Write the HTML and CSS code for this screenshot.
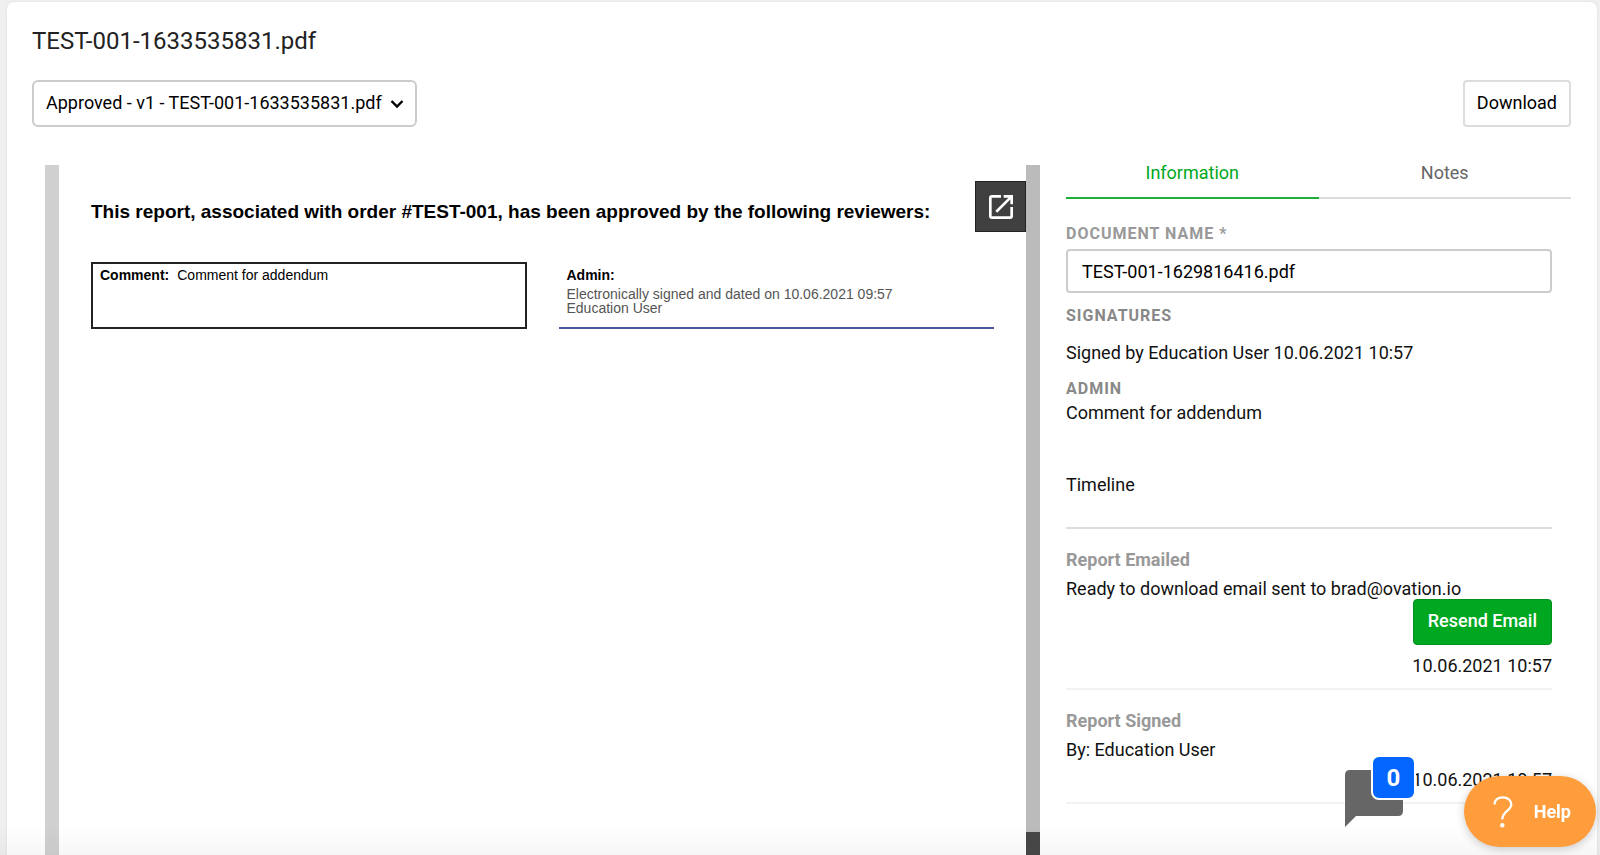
FILE: index.html
```html
<!DOCTYPE html>
<html lang="en">
    <head>
        <meta charset="utf-8">
        <title>TEST-001-1633535831.pdf</title>
        <link rel="stylesheet" href="styles.css">
    </head>
    <body>
        <main class="card">
            <h1 class="title">TEST-001-1633535831.pdf</h1>

            <div class="toolbar">
                <div class="version">
                    <select class="version_select" aria-label="Document version">
                        <option>Approved - v1 - TEST-001-1633535831.pdf</option>
                    </select>
                    <svg class="chevron" viewBox="0 0 14 10" aria-hidden="true">
                        <path d="M1.5 2 L7 7.5 L12.5 2" fill="none" stroke="#000" stroke-width="2.4"/>
                    </svg>
                </div>
                <button class="btn">Download</button>
            </div>

            <div class="content">
                <section class="viewer">
                    <div class="page">
                        <h2 class="page_title">This report, associated with order #TEST-001, has been approved by the following reviewers:</h2>
                        <div class="reviewers">
                            <p class="comment"><b>Comment:</b>Comment for addendum</p>
                            <div class="signature">
                                <b>Admin:</b>
                                <p>Electronically signed and dated on 10.06.2021 09:57<br>Education User</p>
                            </div>
                        </div>
                    </div>
                    <button class="popout" aria-label="Open in new window">
                        <svg viewBox="0 0 24 24" width="32" height="32">
                            <path fill="#fff" d="M19 19H5V5h7V3H5c-1.100 0-2 .9-2 2v14c0 1.100.9 2 2 2h14c1.100 0 2-.9 2-2v-7h-2v7zM14 3v2h3.590l-9.830 9.830 1.410 1.410L19 6.410V10h2V3h-7z"/>
                        </svg>
                    </button>
                    <div class="scroll"><div class="scroll_end"></div></div>
                </section>

                <aside class="side">
                    <nav class="tabs">
                        <button class="tab active">Information</button>
                        <button class="tab">Notes</button>
                    </nav>
                    <div class="info">
                        <label class="label" for="docname">Document name *</label>
                        <input class="docname" id="docname" type="text" value="TEST-001-1629816416.pdf">
                        <h3 class="label sign_label">Signatures</h3>
                        <p class="signed">Signed by Education User 10.06.2021 10:57</p>
                        <h3 class="label">Admin</h3>
                        <p>Comment for addendum</p>
                        <h3 class="timeline_title">Timeline</h3>
                        <ul class="timeline">
                            <li class="event">
                                <h4>Report Emailed</h4>
                                <p>Ready to download email sent to brad@ovation.io</p>
                                <button class="resend">Resend Email</button>
                                <time>10.06.2021 10:57</time>
                            </li>
                            <li class="event">
                                <h4>Report Signed</h4>
                                <p>By: Education User</p>
                                <time>10.06.2021 10:57</time>
                            </li>
                        </ul>
                    </div>
                </aside>
            </div>
        </main>

        <div class="shade"></div>

        <!-- floating chat and help buttons -->
        <button class="chat" aria-label="Messages">
            <svg viewBox="0 0 58 58" width="58" height="58">
                <path fill="#666" d="M5 0H53Q58 0 58 5V41Q58 46 53 46H11L0 57V5Q0 0 5 0Z"/>
            </svg>
            <span class="badge">0</span>
        </button>
        <button class="help">
            <svg viewBox="0 0 20 32" width="20" height="32" aria-hidden="true">
                <path d="M1.500 8.500C1.500 4 5 1.300 9.800 1.300C14.800 1.300 18.300 4.300 18.300 8.500C18.300 14.500 9.300 15 9.300 23.500" fill="none" stroke="#fff" stroke-width="2.300"/>
                <circle cx="9.300" cy="29.300" r="2.200" fill="#fff"/>
            </svg>
            <span>Help</span>
        </button>
    </body>
</html>
```
FILE: styles.css
```css
*{
    box-sizing: border-box;
}
body{
    margin: 0;
    height: 100vh;
    overflow: hidden;
    padding: 2px 3px 0 7px;
    background-color: #f0f0f0;
    color: #111;
    font-family: Roboto, Arial, sans-serif;
    font-size: 18px;
    line-height: 24px;
}
h1,h2,h3,h4,p,ul{
    margin: 0;
    padding: 0;
    font-size: inherit;
    font-weight: normal;
}
button,input,select{
    font-family: inherit;
    font-size: inherit;
    line-height: inherit;
    color: #000;
    margin: 0;
}
button{
    cursor: pointer;
}
.card{
    display: flex;
    flex-direction: column;
    height: 100%;
    padding: 23px 26px 0 25px;
    background-color: white;
    border-radius: 7px 7px 0 0;
    box-shadow: 0 0 3px #ddd;
}
.title{
    font-size: 24px;
    line-height: 32px;
    color: #222;
}

/* version picker and download */
.toolbar{
    display: flex;
    justify-content: space-between;
    margin-top: 23px;
}
.version{
    position: relative;
}
.version_select{
    appearance: none;
    height: 47px;
    padding: 0 32px 2px 12px;
    background-color: white;
    border: 2px solid #ccc;
    border-radius: 6px;
}
.chevron{
    position: absolute;
    right: 13px;
    top: 19px;
    width: 14px;
    height: 10px;
    pointer-events: none;
}
.btn{
    height: 47px;
    padding: 0 12px 2px;
    background-color: white;
    border: 2px solid #ddd;
    border-radius: 4px;
}

/* document viewer */
.content{
    display: flex;
    flex: 1;
    min-height: 0;
    gap: 26px;
    padding: 38px 0 0 13px;
}
.viewer{
    flex: 1;
    min-width: 0;
    display: flex;
    position: relative;
    border-left: 14px solid #d0d0d0;
}
.page{
    flex: 1;
    min-width: 0;
    padding: 33px 32px;
    color: black;
    font-family: "Liberation Sans", Arial, sans-serif;
    font-size: 14px;
    line-height: 14px;
}
.page_title{
    font-size: 19px;
    line-height: 28px;
    font-weight: bold;
    white-space: nowrap;
}
.reviewers{
    display: grid;
    grid-template-columns: 1fr 1fr;
    gap: 32px;
    margin-top: 36px;
}
.comment{
    min-height: 67px;
    padding: 4px 7px;
    border: 2px solid #222;
}
.comment b{
    margin-right: 8px;
}
.signature{
    padding: 6px 8px;
    border-bottom: 2px solid #4a569c;
}
.signature p{
    margin-top: 5px;
    color: #555;
}
.popout{
    position: absolute;
    top: 16px;
    right: 14px;
    display: flex;
    align-items: center;
    justify-content: center;
    width: 51px;
    height: 51px;
    padding: 0;
    background-color: #404040;
    border: 1px solid #222;
}
.scroll{
    display: flex;
    align-items: flex-end;
    width: 14px;
    background-color: #bbb;
}
.scroll_end{
    width: 14px;
    height: 23px;
    background-color: #484848;
}

/* side panel */
.side{
    width: 34%;
    max-width: 505px;
}
.tabs{
    display: flex;
    border-bottom: 2px solid #ddd;
}
.tab{
    flex: 1;
    height: 34px;
    margin-bottom: -2px;
    padding: 0 0 16px;
    background: none;
    border: none;
    border-bottom: 2px solid transparent;
    line-height: 16px;
    color: #666;
}
.tab.active{
    color: #00a81c;
    border-color: #1fae36;
}
.info{
    padding: 23px 19px 0 0;
}
.label{
    display: block;
    font-size: 16px;
    font-weight: bold;
    letter-spacing: 1px;
    text-transform: uppercase;
    color: #888;
}
label.label{
    color: #999;
}
.docname{
    display: block;
    width: 100%;
    height: 44px;
    margin-top: 3px;
    padding: 0 14px;
    background-color: white;
    border: 2px solid #ccc;
    border-radius: 4px;
}
.sign_label{
    margin-top: 11px;
}
.signed{
    margin: 13px 0 12px;
}
.timeline_title{
    padding: 48px 0 30px;
    border-bottom: 2px solid #ddd;
}
.timeline{
    list-style: none;
}
.event{
    display: flex;
    flex-direction: column;
    padding: 19px 0 10px;
    border-bottom: 2px solid #f2f2f2;
}
.event h4{
    margin-bottom: 5px;
    font-weight: bold;
    color: #999;
}
.event time{
    margin-top: 6px;
    align-self: flex-end;
}
.resend{
    align-self: flex-end;
    height: 46px;
    margin-top: -2px;
    margin-bottom: 3px;
    padding: 0 14px 2px;
    background-color: #00a821;
    border: 1px solid #00921c;
    border-radius: 4px;
    color: white;
    font-weight: 500;
}

.shade{
    position: fixed;
    left: 0;
    right: 0;
    bottom: 0;
    height: 30px;
    background: linear-gradient(rgba(0,0,0,0), rgba(0,0,0,0.03));
    pointer-events: none;
}
.chat{
    position: fixed;
    right: 197px;
    bottom: 27px;
    padding: 0;
    background: none;
    border: none;
    line-height: 0;
}
.badge{
    position: absolute;
    top: -15px;
    right: -13px;
    width: 45px;
    height: 45px;
    border: 2px solid white;
    border-radius: 8px;
    background-color: #0566ff;
    color: white;
    font-size: 24px;
    font-weight: bold;
    line-height: 42px;
}
.help{
    position: fixed;
    right: 4px;
    bottom: 8px;
    display: flex;
    align-items: center;
    gap: 21px;
    height: 71px;
    padding: 0 25px 0 29px;
    background-color: #ff9d3c;
    border: none;
    border-radius: 36px;
    box-shadow: 0 2px 10px rgba(0,0,0,0.2);
    color: white;
    font-weight: bold;
}
```
